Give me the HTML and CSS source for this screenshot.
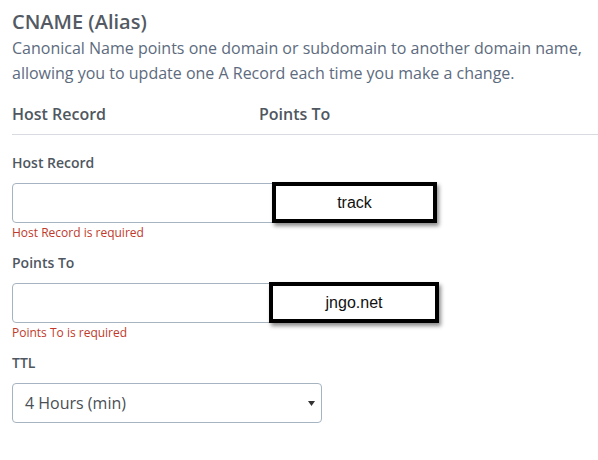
FILE: index.html
```html
<!DOCTYPE html>
<html>
<head>
<meta charset="utf-8">
<link rel="stylesheet" href="styles.css">
</head>
<body>
<div class="page">
  <h2 class="title">CNAME (Alias)</h2>
  <p class="desc">Canonical Name points one domain or subdomain to another domain name, allowing you to update one A Record each time you make a change.</p>
  <div class="cols">
    <div class="col-host">Host Record</div>
    <div class="col-points">Points To</div>
  </div>
  <div class="field">
    <div class="label">Host Record</div>
    <div class="control">
      <div class="input"></div>
      <div class="callout callout-1">track</div>
    </div>
    <div class="error">Host Record is required</div>
  </div>
  <div class="field">
    <div class="label">Points To</div>
    <div class="control">
      <div class="input"></div>
      <div class="callout callout-2">jngo.net</div>
    </div>
    <div class="error">Points To is required</div>
  </div>
  <div class="field">
    <div class="label">TTL</div>
    <div class="select">
      <span>4 Hours (min)</span>
      <svg class="caret" width="7" height="5" viewBox="0 0 7 5"><path d="M0 0H7L3.5 5Z" fill="#333"/></svg>
    </div>
  </div>
</div>
</body>
</html>
```
FILE: styles.css
```css
html, body {
  margin: 0;
  padding: 0;
  background: #fff;
}
body {
  font-family: "Open Sans", "DejaVu Sans", sans-serif;
}
.page {
  padding: 8px 0 0 12px;
}
.title {
  margin: 0;
  font-size: 20px;
  line-height: 28px;
  font-weight: 600;
  color: #535a63;
}
.desc {
  margin: 0;
  font-size: 16px;
  line-height: 25px;
  color: #5d6b7e;
  padding-right: 8px;
}
.cols {
  display: grid;
  grid-template-columns: 247px 1fr;
  margin-top: 16px;
  padding-bottom: 8px;
  border-bottom: 1px solid #d8dbe0;
  font-size: 16px;
  line-height: 24px;
  font-weight: 600;
  color: #4f5761;
}
.field {
  margin-top: 18px;
}
.field + .field {
  margin-top: 11px;
}
.label {
  font-size: 14px;
  line-height: 20px;
  font-weight: 600;
  color: #4f5761;
  margin-bottom: 10px;
}
.control {
  position: relative;
  width: 309px;
}
.input {
  height: 38px;
  border: 1px solid #a6b3c0;
  border-radius: 4px;
  background: #fff;
}
.error {
  font-size: 12px;
  line-height: 19px;
  color: #c0392b;
}
.callout {
  position: absolute;
  top: -1px;
  height: 33px;
  border: 4px solid #000;
  background: #fff;
  box-shadow: 2px 3px 4px rgba(0, 0, 0, 0.45);
  font-family: "Liberation Sans", Arial, sans-serif;
  font-size: 16px;
  line-height: 33px;
  color: #111;
  text-align: center;
}
.callout-1 {
  left: 260px;
  width: 157px;
}
.callout-2 {
  left: 257px;
  width: 162px;
}
.select {
  height: 38px;
  border: 1px solid #a6b3c0;
  border-radius: 4px;
  display: flex;
  align-items: center;
  justify-content: space-between;
  padding: 0 6px 0 12px;
  box-sizing: content-box;
  width: 290px;
  font-size: 16px;
  color: #4a4f55;
}
.caret {
  display: block;
}
```
